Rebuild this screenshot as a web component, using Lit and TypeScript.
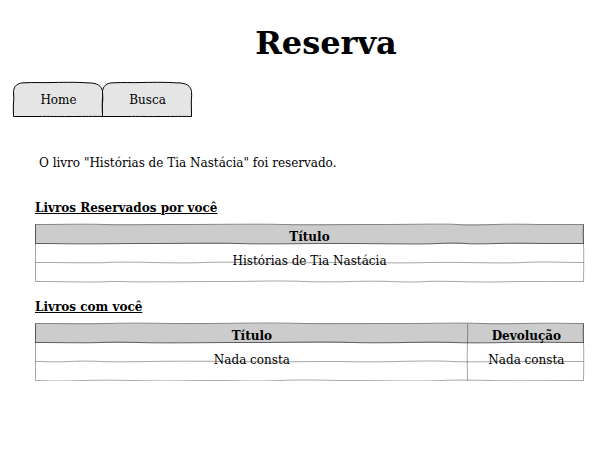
import { LitElement, html, css, svg, nothing } from "lit";
import { customElement, property } from "lit/decorators.js";

type Bend = [number, number];

/** Hand-drawn horizontal stroke: smooth curve through small vertical bends. */
function stroke(y: number, width: number, bends: Bend[]): string {
  const pts: Bend[] = [[0.5, 0], ...bends, [width - 0.5, 0]];
  let d = `M${pts[0][0]} ${y}`;
  for (let i = 1; i < pts.length; i++) {
    const [px, po] = pts[i - 1];
    const [x, o] = pts[i];
    const mid = (px + x) / 2;
    d += `C${mid} ${y + po} ${mid} ${y + o} ${x} ${y + o}`;
  }
  return d;
}

const WAVES: Record<string, Bend[][]> = {
  reserved: [
    [[50, -0.4], [85, 0.3], [140, 0], [225, -0.4], [270, 0.3], [340, 0], [410, -0.5], [435, 0.5], [480, -0.4], [510, 0]],
    [[50, 0.4], [110, 0], [180, -0.3], [230, 0.4], [300, 0], [385, 0.5], [420, -0.4], [440, 0.4], [480, -0.3], [515, 0]],
    [[60, 0.3], [85, -0.4], [150, 0.4], [185, -0.3], [240, 0.3], [320, 0], [365, 0.4], [410, -0.1], [470, 0.4], [508, -0.5]],
    [[60, 0.5], [80, 0], [105, 0.4], [190, 0], [245, -0.5], [290, 0.4], [340, -0.3], [375, 0.5], [400, -0.2], [455, 0.5], [490, 0]],
  ],
  borrowed: [
    [[50, 0.3], [100, -0.5], [150, 0.1], [235, -0.6], [290, 0.2], [370, 0], [425, -0.5], [465, 0.3], [515, -0.4]],
    [[50, 0.3], [80, -0.3], [130, 0.4], [210, 0], [290, -0.4], [340, 0.3], [400, -0.3], [440, 0.4], [500, -0.3]],
    [[20, 0.4], [50, -0.4], [80, 0.3], [150, -0.3], [235, 0.3], [300, 0], [330, 0.4], [400, -0.5], [430, 0.3], [500, 0]],
    [[20, 0.5], [70, -0.3], [130, 0.4], [180, 0], [220, 0.5], [270, -0.5], [320, 0.1], [385, 0.5], [425, -0.4], [480, 0.3]],
  ],
};

@customElement("sketch-tab")
export class SketchTab extends LitElement {
  @property() label = "";

  static styles = css`
    :host {
      display: block;
      flex: 0 0 89px;
    }
    .tab {
      position: relative;
      display: block;
      padding: 2px 0 0 2px;
      line-height: 32px;
      text-align: center;
      color: #000;
      text-decoration: none;
    }
    .shape {
      position: absolute;
      inset: 0;
      width: 100%;
      height: 100%;
      overflow: visible;
      fill: #e5e5e5;
      stroke: #000;
    }
    .text {
      position: relative;
    }
  `;

  render() {
    return html`<a class="tab" href="#">
      <svg class="shape" viewBox="0 0 89 34" preserveAspectRatio="none" aria-hidden="true">
        <path
          d="M0.5 34.5L0.3 24Q1.2 17 0.5 9.5C1 4 4.5 0.9 11 0.8C22 0.2 30 0.9 40 0.5C56 0.2 66 0.2 75 0.9C84 0.6 89 4 89.5 9.5Q90 14 89.3 18L89.5 34.5C74 34.3 70 34.6 56 34.5C44 34.7 38 34.3 25 34.5Z"
        />
      </svg>
      <span class="text">${this.label}</span>
    </a>`;
  }
}

@customElement("sketch-table")
export class SketchTable extends LitElement {
  @property() wave = "reserved";
  @property() caption = "";
  @property({ attribute: false }) columns: string[] = [];
  @property({ attribute: false }) cells: string[] = [];

  static styles = css`
    :host {
      display: block;
    }
    .title {
      margin: 0 0 8px;
      font-size: 12px;
      line-height: 16px;
      text-decoration: underline;
    }
    .frame {
      position: relative;
    }
    .lines {
      position: absolute;
      inset: 0;
      width: 100%;
      height: 100%;
      overflow: visible;
      fill: none;
      stroke: #000;
      stroke-opacity: 0.35;
    }
    .header {
      fill: #ccc;
      stroke: none;
    }
    .heavy {
      stroke-opacity: 0.55;
    }
    .table {
      position: relative;
      width: 100%;
      table-layout: fixed;
      border-collapse: collapse;
    }
    .head,
    .cell {
      box-sizing: border-box;
      padding: 0;
      text-align: center;
      vertical-align: top;
      line-height: 14px;
    }
    .head {
      height: 20px;
      padding-top: 6px;
    }
    .cell {
      height: 38px;
      padding-top: 10px;
    }
    .side {
      width: 21%;
    }
  `;

  render() {
    const waves = WAVES[this.wave];
    const two = this.columns.length > 1;
    return html`
      <h2 class="title" id="title">${this.caption}</h2>
      <div class="frame">
        <svg class="lines" viewBox="0 0 549 58" preserveAspectRatio="none" aria-hidden="true">
          <rect class="header" x="0" y="0" width="549" height="20" />
          ${waves.map(
            (bends, i) => svg`<path class=${i === 1 ? "heavy" : ""} d=${stroke(0.5 + 19 * i, 549, bends)} />`
          )}
          <path d="M0.5 0.5V57.5M548.5 0.5Q548 9 548.5 20T548.5 57.5" />
          <path d="M0.5 0.5V19.5M548.5 0.5Q548 9 548.5 19.5" />
          ${two ? svg`<path d="M432.5 0.5Q433 9 432.5 19.5T432.5 57.5" />` : nothing}
        </svg>
        <table class="table" aria-labelledby="title">
          <colgroup>
            <col />
            ${two ? html`<col class="side" />` : nothing}
          </colgroup>
          <thead>
            <tr>${this.columns.map((c) => html`<th class="head" scope="col">${c}</th>`)}</tr>
          </thead>
          <tbody>
            <tr>${this.cells.map((c) => html`<td class="cell">${c}</td>`)}</tr>
          </tbody>
        </table>
      </div>
    `;
  }
}

@customElement("app-root")
export class AppRoot extends LitElement {
  static styles = css`
    :host {
      display: block;
      background: #fff;
      color: #000;
      font: 12px/16px "DejaVu Serif", serif;
    }
    .heading {
      margin: 0;
      padding: 24px 0 20px 44px;
      font: bold 32px/38px "DejaVu Serif", serif;
      text-align: center;
    }
    .tabs {
      display: flex;
      padding-left: 13px;
    }
    .main {
      padding: 39px 24px 0 35px;
    }
    .message {
      margin: 0 0 29px;
      padding-left: 4px;
    }
    .lists {
      display: grid;
      gap: 17px;
    }
  `;

  render() {
    return html`
      <h1 class="heading">Reserva</h1>
      <nav class="tabs">
        <sketch-tab label="Home"></sketch-tab>
        <sketch-tab label="Busca"></sketch-tab>
      </nav>
      <main class="main">
        <p class="message">O livro "Histórias de Tia Nastácia" foi reservado.</p>
        <div class="lists">
          <sketch-table
            wave="reserved"
            caption="Livros Reservados por você"
            .columns=${["Título"]}
            .cells=${["Histórias de Tia Nastácia"]}
          ></sketch-table>
          <sketch-table
            wave="borrowed"
            caption="Livros com você"
            .columns=${["Título", "Devolução"]}
            .cells=${["Nada consta", "Nada consta"]}
          ></sketch-table>
        </div>
      </main>
    `;
  }
}
